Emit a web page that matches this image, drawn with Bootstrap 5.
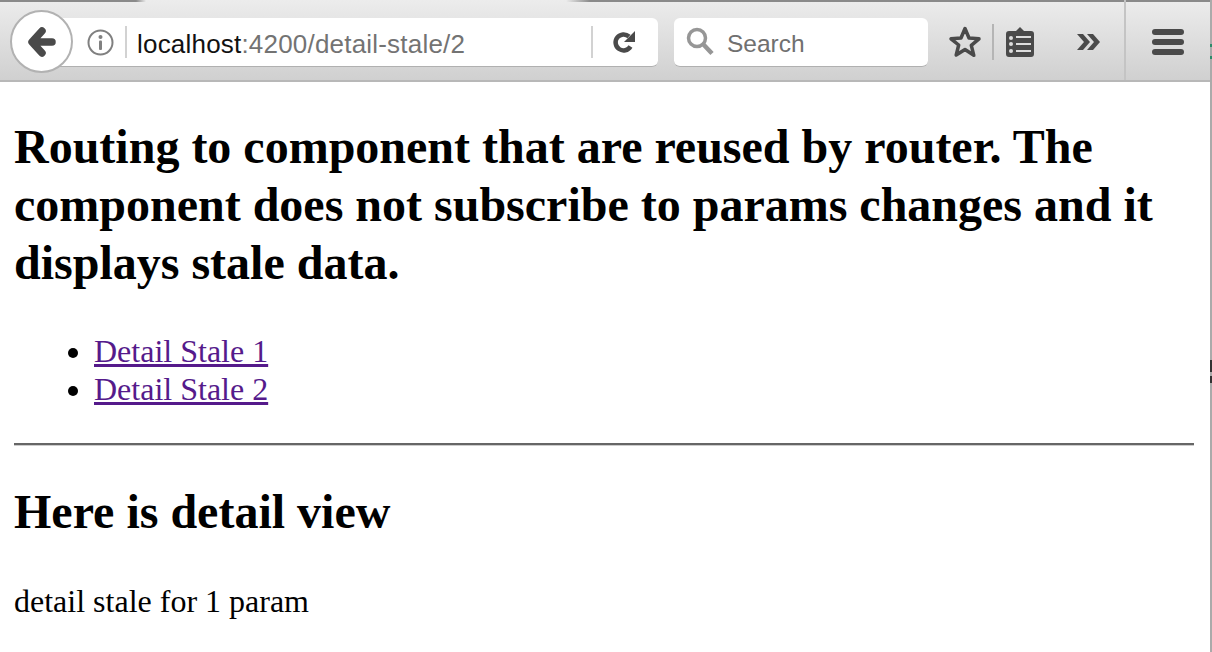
<!DOCTYPE html>
<html lang="en">
<head>
<meta charset="utf-8">
<title>Detail stale</title>
<link href="https://cdn.jsdelivr.net/npm/bootstrap@5.3.0/dist/css/bootstrap.min.css" rel="stylesheet">
<style>
html,body{height:100%;}
body{position:relative;background:#fff;color:#000;font-family:"Liberation Serif",serif;font-size:32px;overflow:hidden;}
.ff-bar{position:relative;height:82px;background:linear-gradient(#ececec,#d0d0d0);border-bottom:2px solid #b8b8b8;padding:18px 0 0 0;font-family:"Liberation Sans",sans-serif;}
.ff-top{position:absolute;left:0;right:0;top:0;height:2px;background:linear-gradient(to right,#8a8a8a 0,#8a8a8a 136px,transparent 146px,transparent 566px,#8a8a8a 590px);}
.ff-edge{position:absolute;right:0;top:0;bottom:0;width:2px;z-index:3;background:linear-gradient(#aaa 0,#aaa 44px,#2e8b6a 44px,#2e8b6a 47px,#aaa 47px,#aaa 56px,#2e8b6a 56px,#2e8b6a 59px,#aaa 59px,#aaa 360px,#333 360px,#333 372px,#aaa 372px,#aaa 376px,#333 376px,#333 383px,#aaa 383px);}
.ff-back{position:absolute;left:10px;top:10px;width:63px;height:63px;border-radius:50%;background:#fff;border:2px solid #b2b2b2;z-index:2;}
.ff-url{margin-left:50px;width:608px;height:49px;background:#fff;border-bottom:1px solid #b0b0b0;border-radius:0 6px 6px 0;padding-left:37px;}
.ff-search{margin-left:16px;width:254px;height:49px;background:#fff;border-bottom:1px solid #b0b0b0;border-radius:6px;padding-left:12px;gap:13px;}
.ff-sep{width:2px;height:32px;background:#d2d2d2;flex:none;}
.ff-sep-first{margin-left:3px;}
.ff-host{font-size:26px;letter-spacing:.2px;line-height:52px;height:48px;color:#111;margin-left:10px;width:454px;white-space:nowrap;}
.ff-host span{color:#737373;}
.ff-stxt{font-size:24.5px;line-height:52px;height:48px;color:#707070;}
.ff-tools{margin-left:20px;flex:1;height:48px;}
.ff-tsep{width:2px;height:36px;background:#b5b5b5;flex:none;margin-left:10px;}
.ff-vsep{position:absolute;left:1124px;top:0;bottom:0;width:2px;background:#c4c4c4;}
.pg-main{padding:0 14px;}
.pg-main h1{font-family:inherit;font-size:48px;font-weight:700;line-height:58px;margin:36px 0 0;letter-spacing:0;}
.pg-main ul{margin:41px 0 0;padding-left:80px;line-height:37.5px;}
.pg-main a{color:#551a8b;}
.pg-main hr{margin:35px 0 0;border:0;height:3px;opacity:1;background:linear-gradient(#666 66%,#ccc 66%);width:1180px;}
.pg-main h2{font-family:inherit;font-size:48px;font-weight:700;line-height:58px;margin:37px 0 0;}
.pg-main p{margin:42px 0 0;line-height:37px;}
</style>
</head>
<body>
<div class="ff-bar d-flex align-items-start">
  <div class="ff-top"></div>
  <div class="ff-back d-flex align-items-center justify-content-center">
    <svg width="30" height="32" viewBox="0 0 30 32"><path d="M15 5 5 16l10 11M7 16h18" fill="none" stroke="#4a4a4a" stroke-width="7.500" stroke-linecap="round" stroke-linejoin="round"/></svg>
  </div>
  <div class="ff-url d-flex align-items-center">
    <svg width="27" height="27" viewBox="0 0 27 27" class="me-2"><circle cx="13.500" cy="13.500" r="12" fill="none" stroke="#808080" stroke-width="2"/><circle cx="13.500" cy="8" r="2" fill="#808080"/><rect x="12" y="11.500" width="3" height="9.500" rx="1" fill="#808080"/></svg>
    <div class="ff-sep ff-sep-first"></div>
    <div class="ff-host">localhost<span>:4200/detail-stale/2</span></div>
    <div class="ff-sep"></div>
    <svg width="26" height="26" viewBox="0 0 26 26" style="margin-left:18px"><path d="M19.500 17.500A8 8 0 1 1 18 7.500" fill="none" stroke="#4a4a4a" stroke-width="4.500"/><path d="M24 2v11H13z" fill="#4a4a4a"/></svg>
  </div>
  <div class="ff-search d-flex align-items-center">
    <svg width="28" height="30" viewBox="0 0 28 30"><circle cx="11" cy="11" r="8.500" fill="none" stroke="#969696" stroke-width="3.500"/><path d="M17 17l9 9.500" stroke="#969696" stroke-width="4.500"/></svg>
    <span class="ff-stxt">Search</span>
  </div>
  <div class="ff-tools d-flex align-items-center">
    <svg width="34" height="34" viewBox="0 0 34 34"><path d="M17 3.500l4 9.500 10 .8-7.700 6.500 2.500 10L17 24.500 8.200 30l2.500-10L3 13.800l10-.8z" fill="none" stroke="#4a4a4a" stroke-width="3.500" stroke-linejoin="round"/></svg>
    <div class="ff-tsep"></div>
    <svg width="30" height="32" viewBox="0 0 30 32" style="margin-left:11px"><path d="M4 5h7l4-4 4 4h7a3 3 0 0 1 3 3v20a3 3 0 0 1-3 3H4a3 3 0 0 1-3-3V8a3 3 0 0 1 3-3z" fill="#4a4a4a"/><path d="M11 11h15M11 18h15M11 25h15" stroke="#ddd" stroke-width="2"/><circle cx="6" cy="12" r="2" fill="#ddd"/><circle cx="6" cy="18" r="2" fill="#ddd"/><circle cx="6" cy="25" r="2" fill="#ddd"/></svg>
    <svg width="26" height="20" viewBox="0 0 26 20" style="margin-left:41px"><path d="M1 2h6l7 8-7 8H1l7-8zM11 2h6l7 8-7 8h-6l7-8z" fill="#4a4a4a"/></svg>
    <svg width="34" height="28" viewBox="0 0 34 28" style="margin-left:49px"><rect x="1" y="1" width="32" height="6" rx="3" fill="#4a4a4a"/><rect x="1" y="11" width="32" height="6" rx="3" fill="#4a4a4a"/><rect x="1" y="21" width="32" height="6" rx="3" fill="#4a4a4a"/></svg>
  </div>
  <div class="ff-vsep"></div>
</div>
<main class="pg-main">
  <h1>Routing to component that are reused by router. The component does not subscribe to params changes and it displays stale data.</h1>
  <ul>
    <li><a href="#">Detail Stale 1</a></li>
    <li><a href="#">Detail Stale 2</a></li>
  </ul>
  <hr>
  <h2>Here is detail view</h2>
  <p>detail stale for 1 param</p>
</main>
<div class="ff-edge"></div>
</body>
</html>
